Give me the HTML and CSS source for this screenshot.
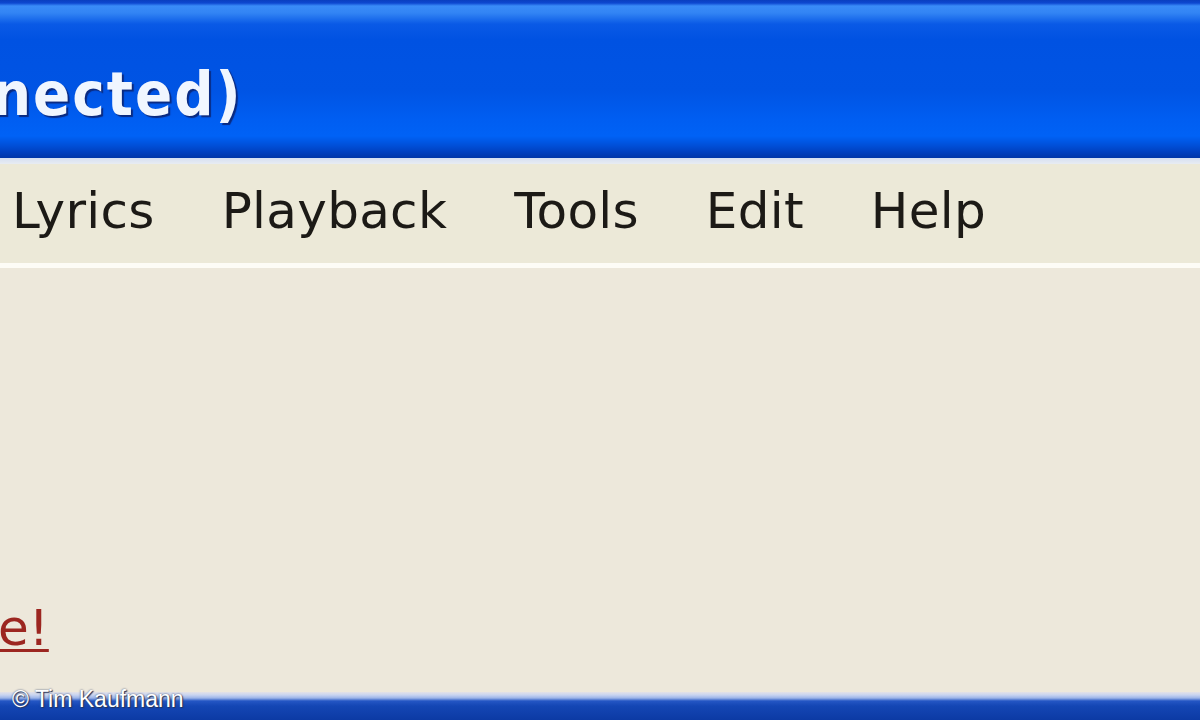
FILE: index.html
```html
<!DOCTYPE html>
<html>
<head>
<meta charset="utf-8">
<link rel="stylesheet" href="styles.css">
</head>
<body>
<div class="window">
  <div class="titlebar">
    <span class="title">nected)</span>
  </div>
  <div class="titlesep"></div>
  <nav class="menubar">
    <span class="menu-item">Lyrics</span>
    <span class="menu-item">Playback</span>
    <span class="menu-item">Tools</span>
    <span class="menu-item">Edit</span>
    <span class="menu-item">Help</span>
  </nav>
  <div class="menusep"></div>
  <main class="content">
    <a class="link" href="#">e!</a>
  </main>
  <div class="bottombar"></div>
  <div class="credit">© Tim Kaufmann</div>
</div>
</body>
</html>
```

FILE: styles.css
```css
html, body {
  margin: 0;
  padding: 0;
  width: 1200px;
  height: 720px;
  overflow: hidden;
  background: #ece9d8;
}
.window {
  position: relative;
  width: 1200px;
  height: 720px;
  display: flex;
  flex-direction: column;
  overflow: hidden;
}
.titlebar {
  height: 158px;
  flex: none;
  background: linear-gradient(to bottom,
    #0a3fc0 0px, #0d48d0 3px,
    #3a8cf8 6px, #3284f4 13px,
    #0a5ae6 24px, #0052e2 40px,
    #0054e4 90px, #005ef2 120px,
    #0062f6 136px, #004ed6 146px,
    #0040c0 152px, #0036a8 158px);
  display: flex;
  align-items: flex-start;
  overflow: hidden;
}
.title {
  font-family: "DejaVu Sans Condensed", "DejaVu Sans", sans-serif;
  font-stretch: condensed;
  font-weight: bold;
  font-size: 61px;
  line-height: 1;
  color: #f0f6ff;
  letter-spacing: 2px;
  margin-left: -8px;
  margin-top: 63px;
  text-shadow: 2px 2px 1px #0a2a80;
  white-space: nowrap;
}
.titlesep {
  height: 6px;
  flex: none;
  background: linear-gradient(to bottom, #d6e0f2, #e8ecf2);
}
.menubar {
  height: 99px;
  flex: none;
  background: #ece9d8;
  display: flex;
  align-items: flex-start;
  gap: 67px;
  padding-left: 12px;
  box-sizing: border-box;
}
.menu-item {
  font-family: "DejaVu Sans", "Liberation Sans", sans-serif;
  font-size: 50px;
  letter-spacing: 0.3px;
  line-height: 1;
  color: #1c1a16;
  margin-top: 22px;
}
.menusep {
  height: 5px;
  flex: none;
  background: #fdfcf6;
}
.content {
  flex: 1;
  background: #ede8db;
  display: flex;
  align-items: flex-start;
}
.link {
  font-family: "DejaVu Sans", "Liberation Sans", sans-serif;
  font-size: 50px;
  line-height: 1;
  color: #9c2620;
  text-decoration: underline;
  text-decoration-thickness: 3px;
  text-underline-offset: 4px;
  margin-left: -2px;
  margin-top: 335px;
}
.bottombar {
  height: 28px;
  flex: none;
  background: linear-gradient(to bottom,
    #e4e2e6 0px, #c8d4f0 3px, #9cb4e8 6px,
    #2456c4 9px, #1446b4 14px, #0c3aa4 28px);
}
.credit {
  position: absolute;
  left: 12px;
  top: 688px;
  font-family: "Liberation Sans", Arial, sans-serif;
  font-size: 23px;
  line-height: 1;
  color: #ffffff;
  text-shadow: 1px 1px 1px #24345a, 0 0 2px #3a4a70;
}
```
